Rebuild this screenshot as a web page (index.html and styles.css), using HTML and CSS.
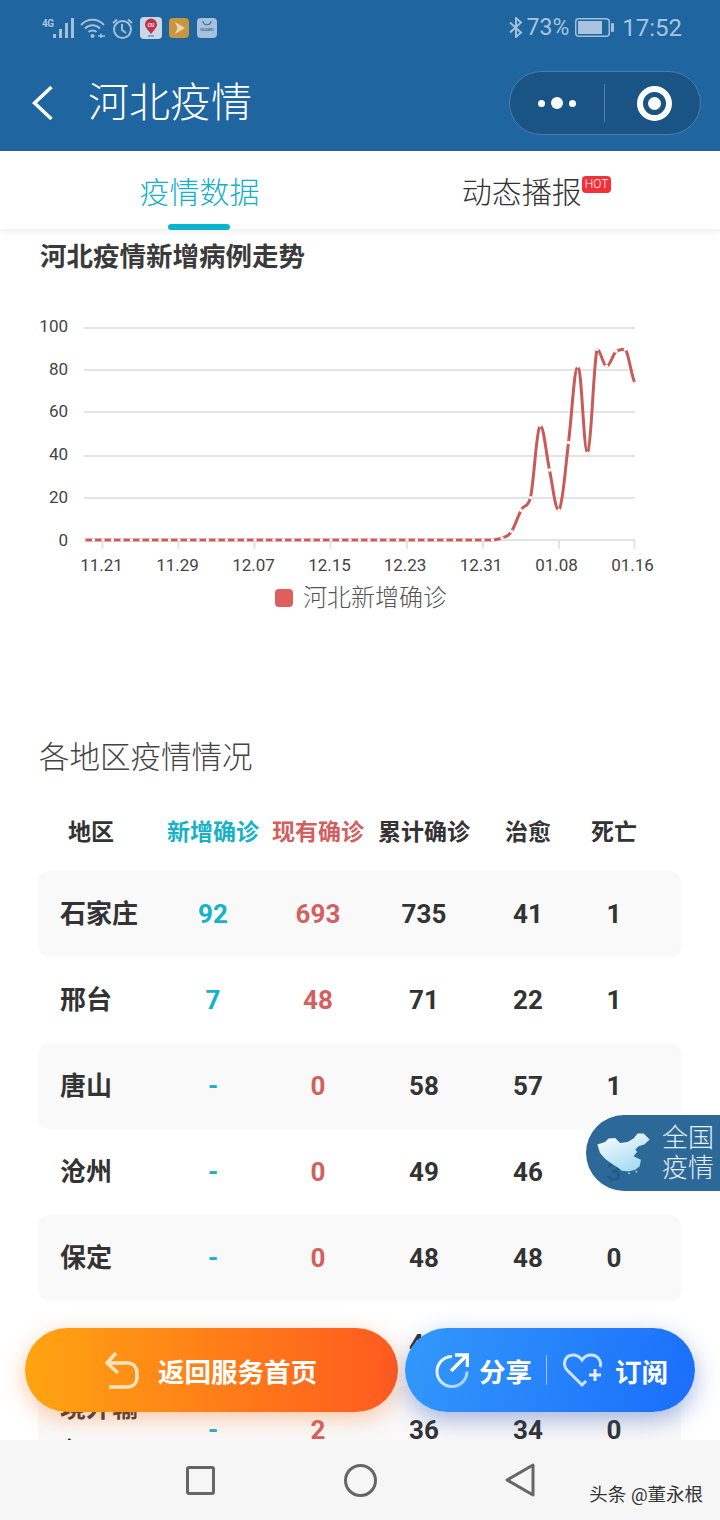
FILE: index.html
```html
<!DOCTYPE html>
<html lang="zh-CN">
<head>
  <meta charset="UTF-8" />
  <title>河北疫情</title>
  <meta name="viewport" content="width=device-width, initial-scale=1" />
  <link rel="stylesheet" href="styles.css">
</head>
<body>

  <header class="top">
    <div class="status">
      <div class="status-left">
        <span class="net">4G</span>
        <svg class="ico-signal" width="21" height="20" viewBox="0 0 21 20"><g fill="#a3c0da"><rect x="0" y="16" width="3" height="4"/><rect x="6" y="11" width="3" height="9"/><rect x="12" y="5" width="3" height="15"/><rect x="18" y="0" width="3" height="20"/></g></svg>
        <svg class="ico-wifi" width="25" height="20" viewBox="0 0 25 20"><g fill="none" stroke="#a3c0da" stroke-width="2"><path d="M1 7C7 0 18 0 24 7"/><path d="M5 10.5C9 6 16 6 20 10.5"/><path d="M8.5 14C10.500 12 14.500 12 16.500 14"/></g><circle cx="12.500" cy="18" r="2" fill="#a3c0da"/><path d="M18 18h7M21 15.500v5" stroke="#a3c0da" stroke-width="1.500"/></svg>
        <svg class="ico-alarm" width="21" height="21" viewBox="0 0 21 21"><g fill="none" stroke="#a3c0da" stroke-width="2"><circle cx="10.500" cy="11.500" r="8.500"/><path d="M10 6v6l4 3"/><path d="M1 5l4-3.500M20 5l-4-3.500"/></g></svg>
        <svg class="ico-app" width="22" height="22" viewBox="0 0 22 22"><rect width="22" height="22" rx="4" fill="#c9d8e6"/><path d="M11 17C7 12 5 10 5 7.500a6 6 0 0 1 12 0C17 10 15 12 11 17z" fill="#c2304a"/><text x="11" y="9.500" class="app-cu">CU</text><path d="M8 19h6" stroke="#7fa6c9" stroke-width="2"/></svg>
        <svg class="ico-app ico-play" width="20" height="20" viewBox="0 0 20 20"><rect width="20" height="20" rx="4" fill="#c7963f"/><path d="M6 4l10 6-10 6 2.500-6z" fill="#ecd7ac"/></svg>
        <svg class="ico-app ico-hw" width="20" height="20" viewBox="0 0 20 20"><rect width="20" height="20" rx="4" fill="#a6c1dc"/><path d="M6 3c0 5 8 5 8 0" fill="none" stroke="#3f6f9f" stroke-width="1.200"/><text x="10" y="13" class="app-hw">HUAWEI</text></svg>
      </div>
      <div class="status-right">
        <svg width="14" height="21" viewBox="0 0 14 21"><path d="M1 5.500l11 10L7 20V1l5 4.500-11 10" fill="none" stroke="#a3c0da" stroke-width="2"/></svg>
        <span class="pct">73%</span>
        <svg class="ico-batt" width="39" height="19" viewBox="0 0 39 19"><rect x=".75" y=".75" width="33.500" height="17.500" rx="3" fill="none" stroke="#a3c0da" stroke-width="1.500"/><rect x="3" y="3" width="24" height="13" fill="#a9c4de"/><rect x="36" y="5" width="3" height="9" rx="1" fill="#a3c0da"/></svg>
        <span class="clock">17:52</span>
      </div>
    </div>
    <div class="navbar">
      <svg class="back" width="22" height="36" viewBox="0 0 22 36"><path d="M19.500 2L2.500 18l17 16" fill="none" stroke="#fff" stroke-width="3.500"/></svg>
      <h1>河北疫情</h1>
      <div class="capsule">
        <div class="dots"><i></i><i class="big"></i><i></i></div>
        <div class="target"><i></i></div>
      </div>
    </div>
  </header>

  <nav class="tabs">
    <div class="tab active">疫情数据</div>
    <div class="tab">动态播报<span class="hot">HOT</span></div>
  </nav>

  <main>
    <h2 class="chart-title">河北疫情新增病例走势</h2>

    <!-- grid and axis labels, the line itself comes from chart.js -->
    <svg class="chart" id="chart" width="720" height="300" viewBox="0 0 720 300">
      <g class="grid">
        <line x1="84" x2="635" y1="48" y2="48"/>
        <line x1="84" x2="635" y1="90" y2="90"/>
        <line x1="84" x2="635" y1="132" y2="132"/>
        <line x1="84" x2="635" y1="176" y2="176"/>
        <line x1="84" x2="635" y1="218" y2="218"/>
        <line x1="84" x2="635" y1="260" y2="260"/>
        <line x1="102.500" x2="102.500" y1="260" y2="269"/>
        <line x1="178.500" x2="178.500" y1="260" y2="269"/>
        <line x1="254.500" x2="254.500" y1="260" y2="269"/>
        <line x1="330.500" x2="330.500" y1="260" y2="269"/>
        <line x1="407" x2="407" y1="260" y2="269"/>
        <line x1="483" x2="483" y1="260" y2="269"/>
        <line x1="559" x2="559" y1="260" y2="269"/>
        <line x1="634.500" x2="634.500" y1="260" y2="269"/>
      </g>
      <g class="y-labels">
        <text x="68" y="52">100</text>
        <text x="68" y="95">80</text>
        <text x="68" y="137">60</text>
        <text x="68" y="180">40</text>
        <text x="68" y="223">20</text>
        <text x="68" y="266">0</text>
      </g>
      <g class="x-labels">
        <text x="101.500" y="291">11.21</text>
        <text x="177.500" y="291">11.29</text>
        <text x="253.500" y="291">12.07</text>
        <text x="329.500" y="291">12.15</text>
        <text x="405" y="291">12.23</text>
        <text x="481" y="291">12.31</text>
        <text x="556.500" y="291">01.08</text>
        <text x="632.500" y="291">01.16</text>
      </g>
    </svg>
    <div class="legend"><i></i>河北新增确诊</div>

    <h2 class="table-title">各地区疫情情况</h2>

    <div class="table-head">
      <div class="head-name">地区</div>
      <div class="teal">新增确诊</div>
      <div class="red">现有确诊</div>
      <div>累计确诊</div>
      <div>治愈</div>
      <div>死亡</div>
    </div>
    <div class="table-body">
      <div class="row"><div class="name">石家庄</div><div class="teal">92</div><div class="red">693</div><div>735</div><div>41</div><div>1</div></div>
      <div class="row"><div class="name">邢台</div><div class="teal">7</div><div class="red">48</div><div>71</div><div>22</div><div>1</div></div>
      <div class="row"><div class="name">唐山</div><div class="teal">-</div><div class="red">0</div><div>58</div><div>57</div><div>1</div></div>
      <div class="row"><div class="name">沧州</div><div class="teal">-</div><div class="red">0</div><div>49</div><div>46</div><div>3</div></div>
      <div class="row"><div class="name">保定</div><div class="teal">-</div><div class="red">0</div><div>48</div><div>48</div><div>0</div></div>
      <div class="row"><div class="name">廊坊</div><div class="teal">-</div><div class="red">0</div><div>43</div><div>43</div><div>0</div></div>
      <div class="row"><div class="name">境外输入</div><div class="teal">-</div><div class="red">2</div><div>36</div><div>34</div><div>0</div></div>
    </div>
  </main>

  <!-- floating shortcut on the right edge -->
  <div class="float-map">
    <svg width="57" height="44" viewBox="165 90 170 130">
      <defs>
        <linearGradient id="mapFill" x1="0" y1="0" x2=".6" y2="1">
          <stop offset="0" stop-color="#ffffff"/>
          <stop offset="1" stop-color="#a5dcf2"/>
        </linearGradient>
      </defs>
      <path fill="url(#mapFill)" d="M172 130L195 122 205 112 225 110 240 125 262 122 280 112 292 97 310 97 328 115 312 130 295 135 285 145 291 151 280 165 302 175 298 195 285 205 265 210 245 208 235 200 215 187 195 172 180 155z"/>
      <path fill="#a5dcf2" d="M264 214h6v4h-6zM286 208h5v5h-5z"/>
    </svg>
    <div class="float-text">全国<br>疫情</div>
  </div>

  <div class="actions">
    <div class="btn-home">
      <svg width="34" height="38" viewBox="0 0 34 38"><path d="M11 2L2 12l11 10M2 12h20c7 0 10 5 10 10v4c0 6-4 10-10 10H4" fill="none" stroke="#ffe3bd" stroke-width="3.500"/></svg>
      <span>返回服务首页</span>
    </div>
    <div class="btn-share">
      <svg width="34" height="35" viewBox="0 0 34 35">
        <defs>
          <linearGradient id="fade" x1="0" y1="0" x2="1" y2="1">
            <stop offset="0" stop-color="#ffffff"/>
            <stop offset="1" stop-color="#9ccbff"/>
          </linearGradient>
        </defs>
        <path d="M17 3.500a15 15 0 1 0 15 15" fill="none" stroke="url(#fade)" stroke-width="3"/>
        <path d="M16 18L32 2M20 2h12.500v12" fill="none" stroke="#fff" stroke-width="3.500"/>
      </svg>
      <span>分享</span>
      <i class="sep"></i>
      <svg class="heart" width="40" height="35" viewBox="0 0 40 35">
        <path d="M23 28l-4 4-15-15C-1 11 2 2 10 2c4 0 7 2 9 5 2-3 5-5 9-5 8 0 11 8 9 12" fill="none" stroke="#cfe4ff" stroke-width="3"/>
        <path d="M32 16v12M26 22h12" stroke="#e6f1ff" stroke-width="3"/>
      </svg>
      <span>订阅</span>
    </div>
  </div>

  <footer class="sysnav">
    <div class="key"><span class="key-square"></span></div>
    <div class="key"><span class="key-round"></span></div>
    <div class="key">
      <svg width="30" height="34" viewBox="0 0 30 34"><path d="M28 2L2 17l26 15z" fill="none" stroke="#666" stroke-width="3" stroke-linejoin="round"/></svg>
    </div>
    <span class="mark">头条 @董永根</span>
  </footer>

  <script src="chart.js"></script>
</body>
</html>
```

FILE: styles.css
```css
html, body {
  margin: 0;
  padding: 0;
}

body {
  position: relative;
  width: 720px;
  height: 1520px;
  overflow: hidden;
  background: #ffffff;
  color: #333333;
  font-family: Roboto, "Noto Sans CJK SC", sans-serif;
}

/* Blue header: status bar + title bar */
.top {
  background: #1f659f;
  height: 151px;
}

.status {
  height: 55px;
  display: flex;
  align-items: center;
  justify-content: space-between;
  padding: 0 38px 0 42px;
  color: #a9c4de;
}

.status-left,
.status-right {
  display: flex;
  align-items: center;
}

.net {
  font-size: 10px;
  font-weight: 700;
  width: 11px;
  margin-bottom: 9px;
  letter-spacing: -0.5px;
}

.ico-signal { margin-top: 0; }
.ico-wifi { margin-left: 6px; }
.ico-alarm { margin-left: 7px; margin-top: 1px; }
.ico-app { margin-left: 7px; }
.ico-play { margin-left: 7px; }
.ico-hw { margin-left: 8px; }

.app-cu {
  font-size: 5px;
  font-weight: 700;
  fill: #ffffff;
  text-anchor: middle;
}

.app-hw {
  font-size: 3.6px;
  font-weight: 700;
  fill: #3f6f9f;
  text-anchor: middle;
}

.pct {
  font-size: 23px;
  margin-left: 4px;
}

.ico-batt { margin-left: 6px; }

.clock {
  font-size: 24px;
  margin-left: 8px;
}

.navbar {
  height: 96px;
  display: flex;
  align-items: center;
  padding: 0 19px 0 32px;
}

.navbar h1 {
  margin: 0 0 0 34px;
  font-size: 41px;
  font-weight: 300;
  line-height: 50px;
  color: #ffffff;
}

.capsule {
  margin-left: auto;
  width: 192px;
  height: 64px;
  box-sizing: border-box;
  border: 1px solid #4a7ca6;
  border-radius: 32px;
  background: #1a5484;
  display: flex;
  align-items: center;
}

.dots {
  width: 95px;
  height: 38px;
  border-right: 1px solid #4f7fa8;
  display: flex;
  align-items: center;
  justify-content: center;
  gap: 6px;
  padding-left: 0;
  box-sizing: border-box;
}

.dots i {
  width: 7px;
  height: 7px;
  border-radius: 50%;
  background: #ffffff;
}

.dots i.big {
  width: 12px;
  height: 12px;
}

.target {
  width: 35px;
  height: 35px;
  box-sizing: border-box;
  margin-left: 32px;
  border: 6px solid #ffffff;
  border-radius: 50%;
  display: flex;
  align-items: center;
  justify-content: center;
}

.target i {
  width: 13px;
  height: 13px;
  border-radius: 50%;
  background: #ffffff;
}

/* Tabs */
.tabs {
  position: relative;
  height: 78px;
  box-sizing: border-box;
  padding: 0 15px 0 31px;
  display: flex;
  background: #ffffff;
  box-shadow: 0 2px 6px rgba(0, 0, 0, 0.08);
}

.tab {
  position: relative;
  flex: 1;
  display: flex;
  justify-content: center;
  align-items: center;
  font-size: 30px;
  font-weight: 300;
  color: #333333;
}

.tab.active {
  color: #14b0c8;
}

.tab.active::after {
  content: "";
  position: absolute;
  left: 137px;
  bottom: -1px;
  width: 62px;
  height: 6px;
  border-radius: 3px;
  background: #0bb3cc;
}

.hot {
  align-self: flex-start;
  margin-top: 25px;
  padding: 0 3px;
  height: 17px;
  line-height: 17px;
  font-size: 12px;
  color: #ffffff;
  background: #f5303a;
  border-radius: 4px;
}

/* Chart */
.chart-title {
  margin: 0;
  padding: 10px 0 0 40px;
  font-size: 26.5px;
  line-height: 36px;
  font-weight: 700;
  color: #3a3a3a;
}

.chart {
  display: block;
  margin-top: 5px;
}

.grid line {
  stroke: #e4e4e4;
  stroke-width: 2;
}

.y-labels text,
.x-labels text {
  font-size: 17px;
  fill: #444444;
}

.y-labels text { text-anchor: end; }
.x-labels text { text-anchor: middle; }

.legend {
  margin-top: 5px;
  display: flex;
  justify-content: center;
  align-items: center;
  gap: 10px;
  padding-left: 2px;
  font-size: 24px;
  line-height: 26px;
  font-weight: 300;
  color: #555555;
}

.legend i {
  width: 18px;
  height: 18px;
  border-radius: 4px;
  background: #df5f5f;
}

/* Region table */
.table-title {
  margin: 127px 0 11px 39px;
  font-size: 30.5px;
  line-height: 40px;
  font-weight: 300;
  color: #444444;
}

.table-head,
.row {
  display: grid;
  grid-template-columns: 123px 104px 106px 106px 102px 70px;
  width: 643px;
  margin-left: 38px;
  align-items: center;
  text-align: center;
}

.table-head {
  height: 82px;
  font-size: 23px;
  font-weight: 700;
  color: #333333;
}

.head-name {
  text-align: left;
  padding-left: 30px;
}

.row {
  height: 86px;
  border-radius: 12px;
  font-size: 26px;
  font-weight: 700;
  color: #333333;
}

.row:nth-child(odd) {
  background: #f9f9f9;
}

.row .name {
  text-align: left;
  padding-left: 22px;
  padding-right: 18px;
  line-height: 43px;
}

.teal { color: #17b2c9; }
.red { color: #d35f5f; }

/* Floating map shortcut */
.float-map {
  position: absolute;
  right: 0;
  top: 1115px;
  width: 134px;
  height: 76px;
  box-sizing: border-box;
  padding-left: 9px;
  display: flex;
  align-items: center;
  gap: 10px;
  border-radius: 38px 0 0 38px;
  background: rgba(31, 95, 146, 0.94);
}

.float-text {
  font-size: 26px;
  line-height: 30px;
  font-weight: 300;
  color: #e6eff6;
}

/* Floating action buttons */
.actions {
  position: absolute;
  left: 25px;
  top: 1328px;
  display: flex;
  gap: 7px;
}

.btn-home,
.btn-share {
  height: 84px;
  border-radius: 42px;
  display: flex;
  align-items: center;
  font-size: 26.500px;
  font-weight: 700;
  color: #ffffff;
}

.btn-home {
  width: 373px;
  box-sizing: border-box;
  padding-left: 80px;
  gap: 19px;
  background: linear-gradient(90deg, #ffa411, #ff5a1f);
  box-shadow: 0 6px 22px rgba(255, 120, 40, 0.4);
}

.btn-share {
  width: 290px;
  box-sizing: border-box;
  padding-left: 30px;
  background: linear-gradient(110deg, #3399fb, #1a6dfb);
  box-shadow: 0 8px 24px rgba(40, 80, 180, 0.4);
}

.btn-share span {
  margin-left: 10px;
}

.sep {
  width: 1px;
  height: 30px;
  margin: 0 16px 0 14px;
  background: rgba(255, 255, 255, 0.55);
}

.btn-share .heart + span {
  margin-left: 12px;
}

/* Android key bar */
.sysnav {
  position: absolute;
  left: 0;
  right: 0;
  bottom: 0;
  height: 80px;
  display: flex;
  justify-content: center;
  align-items: center;
  background: #f6f6f6;
}

.key {
  width: 160px;
  display: flex;
  justify-content: center;
}

.key-square {
  width: 29px;
  height: 29px;
  box-sizing: border-box;
  border: 3px solid #666666;
  border-radius: 3px;
}

.key-round {
  width: 33px;
  height: 33px;
  box-sizing: border-box;
  border: 3px solid #666666;
  border-radius: 50%;
}

.mark {
  position: absolute;
  right: 17px;
  bottom: 14px;
  font-size: 18.500px;
  color: #333333;
  text-shadow: 0 0 2px #ffffff, 0 0 2px #ffffff;
}
```

FILE: chart.js
```js
// daily new cases, 11.19 to 01.16
const tail = [1, 4, 14, 20, 54, 33, 14, 46, 82, 41, 90, 82, 89, 90, 74];
const data = new Array(59 - tail.length).fill(0).concat(tail);

const stepX = 9.5;
const lastX = 635;
const zeroY = 260;
const unitY = 2.12;

const points = data.map((v, i) => ({
  x: lastX - (data.length - 1 - i) * stepX,
  y: zeroY - v * unitY
}));

function clampY(y, a, b) {
  return Math.min(Math.max(y, Math.min(a, b)), Math.max(a, b));
}

function smoothPath(pts) {
  let d = "M" + pts[0].x + " " + pts[0].y;
  for (let i = 0; i < pts.length - 1; i++) {
    const p0 = pts[Math.max(i - 1, 0)];
    const p1 = pts[i];
    const p2 = pts[i + 1];
    const p3 = pts[Math.min(i + 2, pts.length - 1)];
    const c1y = clampY(p1.y + (p2.y - p0.y) * 0.22, p1.y, p2.y);
    const c2y = clampY(p2.y - (p3.y - p1.y) * 0.22, p1.y, p2.y);
    d += " C" + (p1.x + stepX * 0.4) + " " + c1y + " " + (p2.x - stepX * 0.4) + " " + c2y + " " + p2.x + " " + p2.y;
  }
  return d;
}

const svg = document.getElementById("chart");
const NS = "http://www.w3.org/2000/svg";

const line = document.createElementNS(NS, "path");
line.setAttribute("d", smoothPath(points));
line.setAttribute("fill", "none");
line.setAttribute("stroke", "#c95a5a");
line.setAttribute("stroke-width", "3");
svg.appendChild(line);

// small white markers cut the flat part into dashes
points.forEach(p => {
  const dot = document.createElementNS(NS, "circle");
  dot.setAttribute("cx", p.x);
  dot.setAttribute("cy", p.y);
  dot.setAttribute("r", "1.7");
  dot.setAttribute("fill", "#ffffff");
  svg.appendChild(dot);
});
```
